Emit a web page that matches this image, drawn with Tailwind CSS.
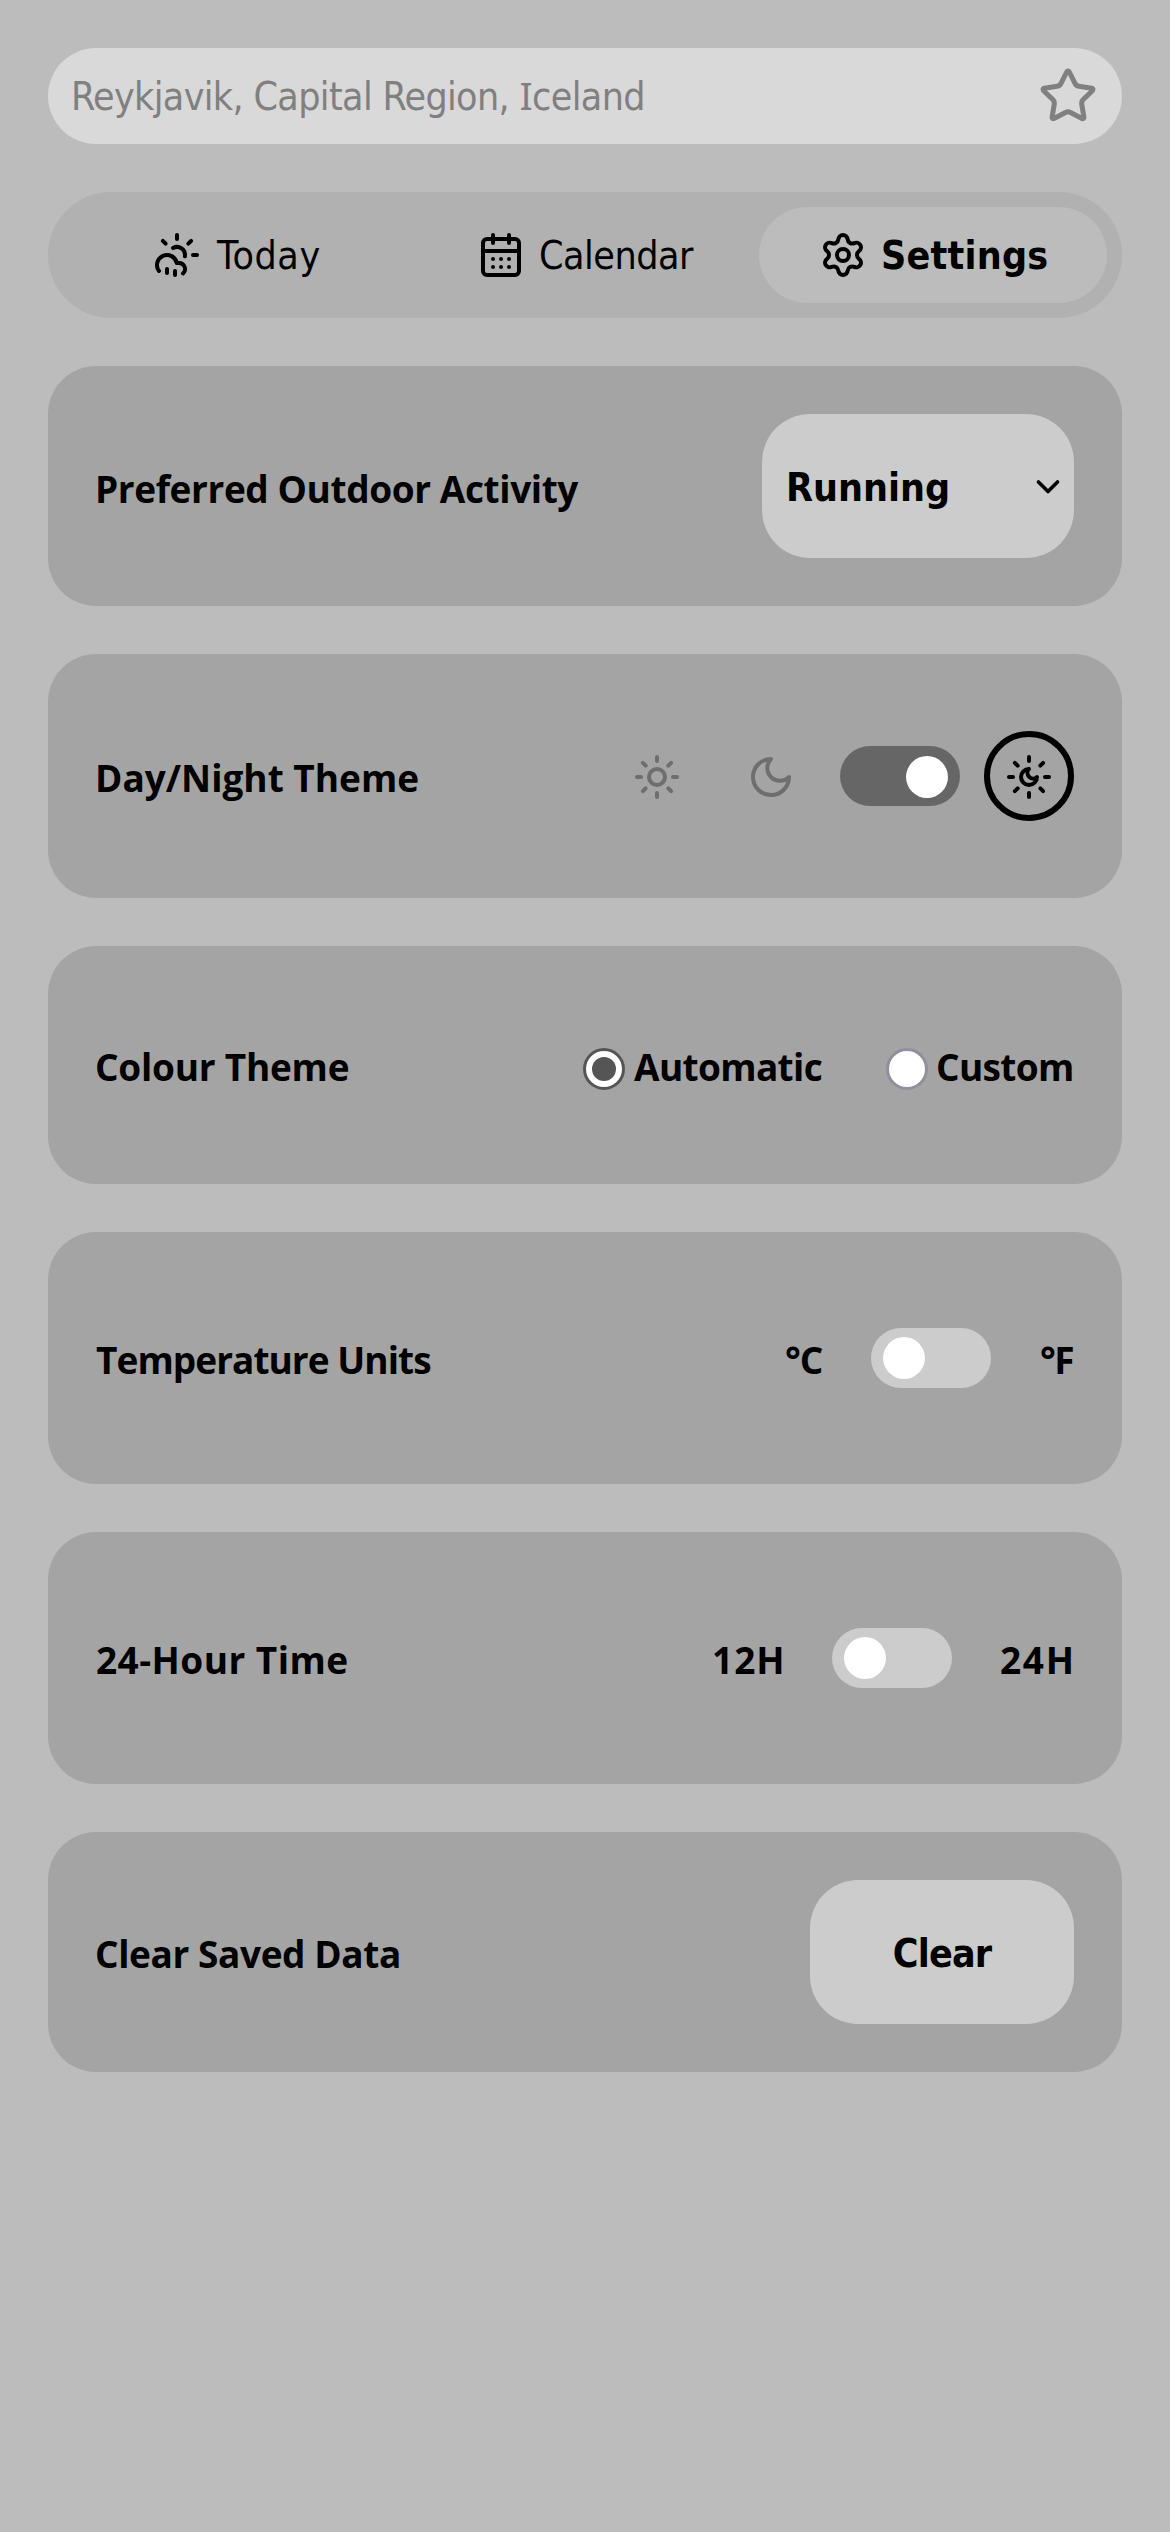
<!DOCTYPE html>
<html lang="en">
<head>
<meta charset="utf-8">
<title>Weather settings</title>
<script src="https://cdn.jsdelivr.net/npm/@tailwindcss/browser@4"></script>
</head>
<body class="bg-[#bcbcbc] text-black">
<div class="flex min-h-[2532px] w-full flex-col gap-12 p-12 font-['Open_Sans','Noto_Sans',sans-serif] text-[37px] leading-[50px] font-bold whitespace-nowrap">

  <!-- Location search -->
  <header class="flex h-24 items-center justify-between rounded-[48px] bg-[#d9d9d9] pr-6 pl-[23px] text-[#808080]">
    <span class="font-['DejaVu_Sans_Condensed','DejaVu_Sans',sans-serif] text-[39px] font-normal tracking-[-0.65px]">Reykjavik, Capital Region, <span class="font-['Noto_Sans',sans-serif]">I</span>celand</span>
    <svg class="size-[60px]" viewBox="0 0 24 24" fill="none" stroke="currentColor" stroke-width="2" stroke-linecap="round" stroke-linejoin="round"><path d="M11.525 2.295a.53.53 0 0 1 .95 0l2.31 4.679a2.123 2.123 0 0 0 1.595 1.16l5.166.756a.53.53 0 0 1 .294.904l-3.736 3.638a2.123 2.123 0 0 0-.611 1.878l.882 5.14a.53.53 0 0 1-.771.56l-4.618-2.428a2.122 2.122 0 0 0-1.973 0L6.396 21.01a.53.53 0 0 1-.77-.56l.881-5.139a2.122 2.122 0 0 0-.611-1.879L2.16 9.795a.53.53 0 0 1 .294-.906l5.165-.755a2.122 2.122 0 0 0 1.597-1.16z"/></svg>
  </header>

  <!-- Tabs -->
  <nav class="grid h-[126px] grid-cols-3 rounded-[63px] bg-[#b1b1b1] p-[15px] font-['DejaVu_Sans_Condensed','DejaVu_Sans',sans-serif] text-[39px]">
    <a class="flex items-center gap-4 pl-[90px] font-normal">
      <svg class="size-12" viewBox="0 0 24 24" fill="none" stroke="currentColor" stroke-width="2" stroke-linecap="round" stroke-linejoin="round"><path d="M12 2v2"/><path d="m4.93 4.93 1.41 1.41"/><path d="M20 12h2"/><path d="m19.07 4.93-1.41 1.41"/><path d="M15.947 12.65a4 4 0 0 0-5.925-4.128"/><path d="M3 20a5 5 0 1 1 8.9-4H13a3 3 0 0 1 2 5.24"/><path d="M11 20v2"/><path d="M7 19v2"/></svg>
      <span class="pt-[2px] tracking-[0.6px]">Today</span>
    </a>
    <a class="flex items-center gap-[14px] pl-[66px] font-normal">
      <svg class="size-12" viewBox="0 0 24 24" fill="none" stroke="currentColor" stroke-width="2" stroke-linecap="round" stroke-linejoin="round"><path d="M8 2v4"/><path d="M16 2v4"/><rect width="18" height="18" x="3" y="4" rx="2"/><path d="M3 10h18"/><path d="M8 14h.01"/><path d="M12 14h.01"/><path d="M16 14h.01"/><path d="M8 18h.01"/><path d="M12 18h.01"/><path d="M16 18h.01"/></svg>
      <span class="pt-[2px] tracking-[-0.48px]">Calendar</span>
    </a>
    <a class="flex items-center gap-[14px] rounded-[48px] bg-[#bcbcbc] pl-[60px]">
      <svg class="size-12" viewBox="0 0 24 24" fill="none" stroke="currentColor" stroke-width="2" stroke-linecap="round" stroke-linejoin="round"><path d="M9.671 4.136a2.34 2.34 0 0 1 4.659 0 2.34 2.34 0 0 0 3.319 1.915 2.34 2.34 0 0 1 2.33 4.033 2.34 2.34 0 0 0 0 3.831 2.34 2.34 0 0 1-2.33 4.033 2.34 2.34 0 0 0-3.319 1.915 2.34 2.34 0 0 1-4.659 0 2.34 2.34 0 0 0-3.32-1.915 2.34 2.34 0 0 1-2.33-4.033 2.34 2.34 0 0 0 0-3.831A2.34 2.34 0 0 1 6.35 6.051a2.34 2.34 0 0 0 3.319-1.915"/><circle cx="12" cy="12" r="3"/></svg>
      <span class="pt-[2px] tracking-[0.22px]">Settings</span>
    </a>
  </nav>

  <!-- Outdoor activity -->
  <section class="flex h-60 items-center justify-between rounded-[48px] bg-[#a4a4a4] px-12">
    <span class="-ml-[1px] pt-[5px] tracking-[-0.4px]">Preferred Outdoor Activity</span>
    <button class="flex h-36 w-[312px] items-center justify-between rounded-[48px] bg-[#cccccc] pr-[14px] pl-6">
      <span class="pt-1 font-['DejaVu_Sans_Condensed','DejaVu_Sans',sans-serif] text-[39px]">Running</span>
      <svg class="h-4 w-6" viewBox="0 0 24 16" fill="none" stroke="currentColor" stroke-width="3.6" stroke-linecap="round" stroke-linejoin="round"><path d="M2.5 4 12 13.5 21.500 4"/></svg>
    </button>
  </section>

  <!-- Day/night theme -->
  <section class="flex h-[244px] items-center justify-between rounded-[48px] bg-[#a4a4a4] px-12">
    <span class="-ml-[1px] pt-[3px]">Day/Night Theme</span>
    <div class="flex items-center">
      <svg class="mt-[2px] size-12 text-[#6e6e6e]" viewBox="0 0 24 24" fill="none" stroke="currentColor" stroke-width="2" stroke-linecap="round" stroke-linejoin="round"><circle cx="12" cy="12" r="4"/><path d="M12 2v2"/><path d="M12 20v2"/><path d="m4.93 4.93 1.41 1.41"/><path d="m17.66 17.66 1.41 1.41"/><path d="M2 12h2"/><path d="M20 12h2"/><path d="m6.34 17.66-1.41 1.41"/><path d="m19.07 4.93-1.41 1.41"/></svg>
      <svg class="mt-[2px] ml-[66px] size-12 text-[#6e6e6e]" viewBox="0 0 24 24" fill="none" stroke="currentColor" stroke-width="2" stroke-linecap="round" stroke-linejoin="round"><path d="M12 3a6 6 0 0 0 9 9 9 9 0 1 1-9-9Z"/></svg>
      <div class="ml-[45px] flex h-[60px] w-[120px] items-center justify-end rounded-full bg-[#666666] pt-[2px] pr-3"><div class="size-[42px] rounded-full bg-white"></div></div>
      <div class="ml-6 flex size-[90px] items-center justify-center rounded-full border-6 border-black pt-[2px]">
        <svg class="size-12" viewBox="0 0 24 24" fill="none" stroke="currentColor" stroke-width="2" stroke-linecap="round" stroke-linejoin="round"><path d="M12 8a2.83 2.83 0 0 0 4 4 4 4 0 1 1-4-4"/><path d="M12 2v2"/><path d="M12 20v2"/><path d="m4.93 4.93 1.41 1.41"/><path d="m17.66 17.66 1.41 1.41"/><path d="M2 12h2"/><path d="M20 12h2"/><path d="m6.34 17.66-1.41 1.41"/><path d="m19.07 4.93-1.41 1.41"/></svg>
      </div>
    </div>
  </section>

  <!-- Colour theme -->
  <section class="flex h-[238px] items-center justify-between rounded-[48px] bg-[#a4a4a4] px-12">
    <span class="-ml-[1px] pt-[4px] tracking-[-0.24px]">Colour Theme</span>
    <div class="flex items-center gap-16">
      <label class="flex items-center gap-[9px]">
        <span class="mt-2 flex size-[42px] items-center justify-center rounded-full border-3 border-[#555555] bg-white"><span class="size-6 rounded-full bg-[#555555]"></span></span>
        <span class="w-[188px] pt-[4px] tracking-[-0.65px]">Automatic</span>
      </label>
      <label class="flex items-center gap-2">
        <span class="mt-2 size-[42px] rounded-full border-3 border-[#8f8f9d] bg-white"></span>
        <span class="w-[138px] pt-[4px] tracking-[-0.65px]">Custom</span>
      </label>
    </div>
  </section>

  <!-- Temperature units -->
  <section class="flex h-[252px] items-center justify-between rounded-[48px] bg-[#a4a4a4] px-12">
    <span class="pt-[3px] tracking-[-0.95px]">Temperature Units</span>
    <div class="flex items-center gap-12">
      <span class="w-[38px] pt-[3px] tracking-[-1px]">°C</span>
      <div class="flex h-[60px] w-[120px] rounded-full bg-[#cccccc] pt-[9px] pl-3"><div class="size-[42px] rounded-full bg-white"></div></div>
      <span class="w-[35px] pt-[3px] pl-px tracking-[-1.7px]">°F</span>
    </div>
  </section>

  <!-- Clock format -->
  <section class="flex h-[252px] items-center justify-between rounded-[48px] bg-[#a4a4a4] px-12">
    <span class="pt-[3px] tracking-[0.45px]">24-Hour Time</span>
    <div class="flex items-center gap-12">
      <span class="w-[72px] pt-[3px] tracking-[1px]">12H</span>
      <div class="flex h-[60px] w-[120px] rounded-full bg-[#cccccc] pt-[9px] pl-3"><div class="size-[42px] rounded-full bg-white"></div></div>
      <span class="w-[74px] pt-[3px] tracking-[1.7px]">24H</span>
    </div>
  </section>

  <!-- Clear data -->
  <section class="flex h-60 items-center justify-between rounded-[48px] bg-[#a4a4a4] px-12">
    <span class="-ml-[1px] pt-[3px] tracking-[-0.4px]">Clear Saved Data</span>
    <button class="flex h-36 w-[264px] items-center justify-center rounded-[48px] bg-[#cccccc] pt-1 font-['DejaVu_Sans_Condensed','DejaVu_Sans',sans-serif] text-[39px] tracking-[-0.8px]">Clear</button>
  </section>
</div>
</body>
</html>
